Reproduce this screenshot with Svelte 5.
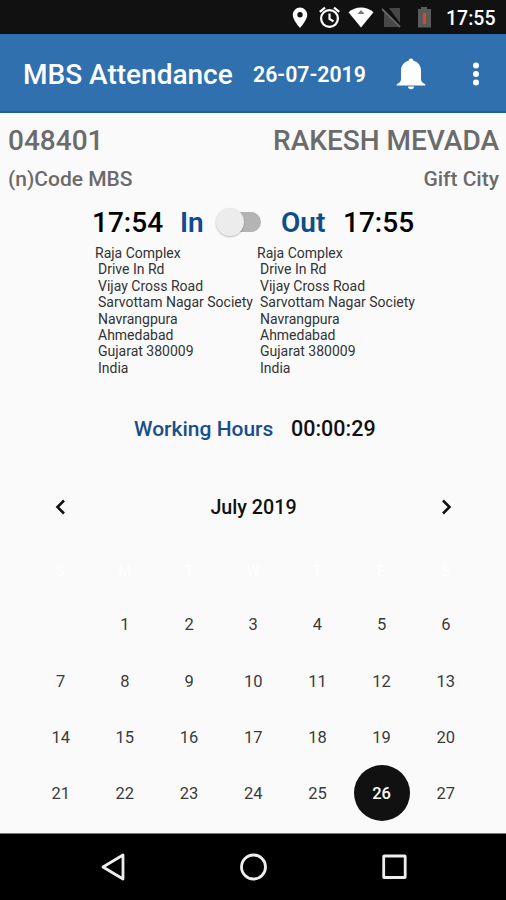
<script lang="ts">
  const address = [
    'Raja Complex',
    'Drive In Rd',
    'Vijay Cross Road',
    'Sarvottam Nagar Society',
    'Navrangpura',
    'Ahmedabad',
    'Gujarat 380009',
    'India'
  ];

  const weekdays = ['S', 'M', 'T', 'W', 'T', 'F', 'S'];
  // July 2019 starts on a Monday, so the first cell stays empty
  const days = Array.from({ length: 28 }, (_, i) => i);

  let selected = $state(26);
  let checkedOut = $state(false);
</script>

<div class="screen">
  <div class="status-bar">
    <svg class="status-icons" width="146" height="34" viewBox="0 0 146 34" aria-hidden="true">
      <path
        fill="#fff"
        fill-rule="evenodd"
        d="M13 7.500a7.300 7.300 0 0 0-7.300 7.300C5.700 20 13 28 13 28s7.300-8 7.300-13.200A7.300 7.300 0 0 0 13 7.500zm0 4.600a2.700 2.700 0 1 1 0 5.400 2.700 2.700 0 0 1 0-5.400z"
      />
      <g fill="none" stroke="#fff" stroke-width="2.200">
        <circle cx="42.500" cy="18.500" r="8.400" />
        <path d="M42.500 13.500v5.300l4 2.600M32.800 11.800l5.200-4.200M52.200 11.800l-5.200-4.200" />
      </g>
      <path fill="#fff" d="M61.500 12.300C68 5.900 80 5.900 86.500 12.300L74 27.500z" />
      <path fill="#777" d="M70.500 14l3.500-4 3.500 4z" />
      <path fill="#484848" d="M102 8h11v15zM97 12l15 15H97z" />
      <path fill="none" stroke="#666" stroke-width="1.800" d="M95 9l18 18" />
      <path fill="#5a5a5a" d="M131 9h3V7h6v2h4v18.500h-13z" />
      <path fill="#d9482b" d="M136 13h3v11h-3z" />
    </svg>
    <span class="clock">17:55</span>
  </div>

  <header class="app-bar">
    <h1>MBS Attendance</h1>
    <span class="today">26-07-2019</span>
    <button class="bell" aria-label="Notifications">
      <svg width="30" height="34" viewBox="0 0 30 34">
        <path
          fill="#fff"
          d="M15 1.500c-1.500 0-2.300.9-2.300 2.200C8 4.900 5 8.500 5 13.500V22c0 2.500-1.500 4-4.300 5.200v1.300h28.600v-1.300C26.500 26 25 24.500 25 22v-8.500c0-5-3-8.600-7.700-9.800 0-1.300-.8-2.200-2.300-2.200zM12 29.500h6c0 1.800-1.300 2.800-3 2.800s-3-1-3-2.800z"
        />
      </svg>
    </button>
    <button class="more" aria-label="More options">
      <svg width="8" height="26" viewBox="0 0 8 26" fill="#fff">
        <circle cx="4" cy="4.500" r="3" />
        <circle cx="4" cy="13" r="3" />
        <circle cx="4" cy="21.500" r="3" />
      </svg>
    </button>
  </header>

  <main>
    <div class="row employee">
      <span>048401</span>
      <span class="name">RAKESH MEVADA</span>
    </div>
    <div class="row office">
      <span>(n)Code MBS</span>
      <span class="city">Gift City</span>
    </div>

    <div class="punch">
      <span class="time">17:54</span>
      <span class="label in">In</span>
      <button
        class="toggle"
        class:on={checkedOut}
        role="switch"
        aria-checked={checkedOut}
        aria-label="Punch in or out"
        onclick={() => (checkedOut = !checkedOut)}
      ><i></i></button>
      <span class="label out">Out</span>
      <span class="time">17:55</span>
    </div>

    <div class="places">
      {#each [0, 1] as column (column)}
        <ul>
          {#each address as line}
            <li>{line}</li>
          {/each}
        </ul>
      {/each}
    </div>

    <div class="hours">
      <span class="hours-label">Working Hours</span>
      <span class="hours-value">00:00:29</span>
    </div>

    <div class="month">
      <button aria-label="Previous month">
        <svg width="20" height="20" viewBox="0 0 20 20"><path d="M14 3.500L7.500 10l6.500 6.500" /></svg>
      </button>
      <h2>July 2019</h2>
      <button aria-label="Next month">
        <svg width="20" height="20" viewBox="0 0 20 20"><path d="M7 3.500L13.500 10 7 16.500" /></svg>
      </button>
    </div>

    <div class="week">
      {#each weekdays as day}
        <span>{day}</span>
      {/each}
    </div>

    <div class="days">
      {#each days as day (day)}
        {#if day === 0}
          <span></span>
        {:else}
          <button class:selected={day === selected} onclick={() => (selected = day)}>{day}</button>
        {/if}
      {/each}
    </div>
  </main>

  <nav class="nav-bar">
    <svg width="28" height="30" viewBox="0 0 28 30"><path d="M4 15L24 3v24z" /></svg>
    <svg width="28" height="30" viewBox="0 0 28 30"><circle cx="14.500" cy="15" r="12" /></svg>
    <svg width="28" height="30" viewBox="0 0 28 30"><rect x="3.700" y="4" width="21.500" height="21.500" rx="0.500" /></svg>
  </nav>
</div>

<style>
  :global(body) {
    margin: 0;
    background: #fafafa;
  }

  .screen {
    display: flex;
    flex-direction: column;
    width: 506px;
    height: 900px;
    overflow: hidden;
    background: #fafafa;
    color: #111;
    font-family: Roboto, "Noto Sans", sans-serif;
    font-weight: 500;
  }

  .screen * {
    box-sizing: border-box;
  }

  button {
    padding: 0;
    border: 0;
    background: none;
    color: inherit;
    font: inherit;
    cursor: pointer;
  }

  svg {
    display: block;
  }

  span,
  h1,
  h2 {
    white-space: nowrap;
  }

  .status-bar {
    display: flex;
    flex: none;
    align-items: center;
    justify-content: flex-end;
    height: 34px;
    padding-right: 11px;
    background: #111;
    color: #fff;
  }

  .status-icons {
    margin-right: 13px;
  }

  .clock {
    width: 49px;
    padding-top: 3px;
    font-size: 19.500px;
    line-height: 24px;
  }

  .app-bar {
    display: flex;
    flex: none;
    align-items: center;
    height: 79px;
    padding: 3px 0 0 23px;
    border-bottom: 2px solid #1c5f9e;
    background: #3070ae;
    color: #fff;
  }

  h1 {
    width: 230px;
    margin: 0;
    padding-top: 2px;
    font-size: 28px;
    font-weight: 500;
    line-height: 34px;
  }

  .today {
    width: 143px;
    padding-top: 1px;
    font-size: 21.300px;
    font-weight: 600;
    line-height: 26px;
  }

  .more {
    margin-left: 46px;
  }

  main {
    display: flex;
    flex: 1;
    flex-direction: column;
  }

  .row {
    display: flex;
    justify-content: space-between;
    padding: 0 7px 0 8px;
    color: #6b6b6b;
  }

  .employee {
    margin-top: 11px;
    font-size: 28px;
    line-height: 34px;
  }

  .office {
    margin-top: 8px;
    font-size: 21px;
    line-height: 26px;
  }

  .punch {
    display: flex;
    align-items: center;
    height: 34px;
    margin-top: 14px;
    padding-left: 92px;
    font-size: 28px;
    line-height: 34px;
  }

  .time {
    width: 72px;
    color: #000;
  }

  .label {
    color: #0f4c89;
    font-weight: 600;
  }

  .in {
    width: 33px;
    margin-left: 16px;
  }

  .out {
    width: 46px;
    margin: 0 16px 0 20px;
  }

  .toggle {
    display: flex;
    align-items: center;
    width: 36px;
    height: 20px;
    margin: -2px 0 0 12px;
    border-radius: 10px;
    background: #b4b4b4;
  }

  .toggle i {
    flex: none;
    width: 28px;
    height: 28px;
    margin-left: -9px;
    border-radius: 50%;
    background: #ececec;
    box-shadow: 0 1px 2px rgba(0, 0, 0, 0.25);
  }

  .toggle.on i {
    margin-left: 16px;
  }

  .places {
    display: flex;
    margin-top: 5px;
    padding-left: 95px;
    color: #333;
    font-size: 14px;
    font-weight: 400;
    line-height: 16.400px;
  }

  ul {
    width: 162px;
    margin: 0;
    padding: 0;
    list-style: none;
    white-space: nowrap;
  }

  li + li {
    padding-left: 3px;
  }

  .hours {
    display: flex;
    margin-top: 40px;
    padding-left: 134px;
    font-size: 21.500px;
    line-height: 26px;
  }

  .hours-label {
    width: 157px;
    color: #184f8b;
    font-size: 21px;
  }

  .month {
    display: flex;
    align-items: center;
    justify-content: space-between;
    height: 40px;
    margin-top: 45px;
    padding: 0 50px;
  }

  .month path {
    fill: none;
    stroke: #111;
    stroke-width: 2.600;
  }

  h2 {
    margin: 0;
    padding: 2px 0 0 1px;
    font-size: 19.700px;
    font-weight: 500;
    line-height: 26px;
  }

  .week,
  .days {
    display: grid;
    grid-template-columns: repeat(7, 64.200px);
    justify-content: center;
    justify-items: center;
    font-size: 16.500px;
    font-weight: 400;
  }

  .week {
    margin-top: 34px;
    color: #fff;
    font-size: 14px;
    line-height: 20px;
  }

  .days {
    grid-auto-rows: 56.200px;
    margin-top: 15.600px;
    padding-left: 0.500px;
    color: #3a3a3a;
  }

  .days button {
    width: 56px;
    height: 56px;
    border-radius: 50%;
  }

  .days .selected {
    background: #111;
    color: #fff;
    font-weight: 500;
  }

  .nav-bar {
    display: flex;
    flex: none;
    align-items: center;
    justify-content: center;
    gap: 112.500px;
    height: 67px;
    border-top: 1px solid #777;
    background: #000;
  }

  .nav-bar svg {
    fill: none;
    stroke: #eee;
    stroke-width: 2.800;
    stroke-linejoin: round;
  }
</style>
